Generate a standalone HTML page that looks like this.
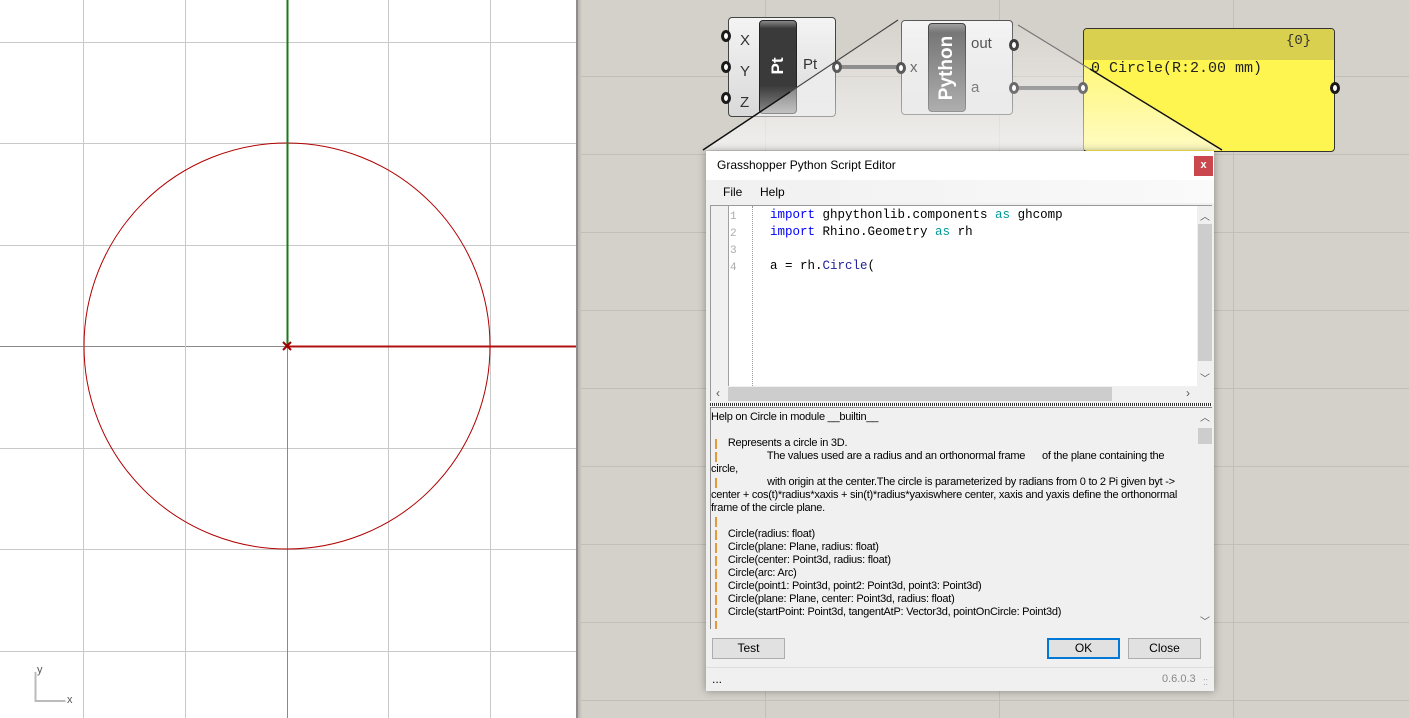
<!DOCTYPE html>
<html><head><meta charset="utf-8"><style>
*{margin:0;padding:0;box-sizing:border-box}
body{width:1409px;height:718px;overflow:hidden;position:relative;background:#d4d0ca;font-family:"Liberation Sans",sans-serif}
.abs{position:absolute}
.mono{font-family:"Liberation Mono",monospace}
.hl{position:absolute;left:0;height:1px;background:#c9c9c9;width:576px}
.vl{position:absolute;top:0;width:1px;background:#c9c9c9;height:718px}
.ghl{position:absolute;left:578px;right:0;height:1px;background:#c2beb8}
.gvl{position:absolute;top:0;width:1px;background:#c2beb8;height:718px}
.port{position:absolute;width:10px;height:12px;border:3px solid #1a1a1a;border-radius:50%;background:#fff}
.help div{white-space:pre;height:13px;line-height:13px}
.bar{position:absolute;left:4px;width:2px;height:10px;background:#e39a3a}
.btn{position:absolute;height:21px;background:#e1e1e1;border:1px solid #adadad;font-size:12px;text-align:center;line-height:19px;color:#000}
</style></head><body>
<!-- left viewport -->
<div class="abs" style="left:0;top:0;width:576px;height:718px;background:#fff"></div>
<div class="hl" style="top:42px"></div><div class="hl" style="top:143px"></div><div class="hl" style="top:245px"></div>
<div class="hl" style="top:448px"></div><div class="hl" style="top:549px"></div><div class="hl" style="top:651px"></div>
<div class="hl" style="top:346px;width:287px;background:#8a8a8a"></div>
<div class="vl" style="left:83px"></div><div class="vl" style="left:185px"></div><div class="vl" style="left:388px"></div><div class="vl" style="left:490px"></div>
<div class="vl" style="left:287px;top:346px;height:372px;background:#8a8a8a"></div>
<svg class="abs" style="left:0;top:0" width="576" height="718">
<circle cx="287" cy="346" r="203" fill="none" stroke="#b00000" stroke-width="1"/>
<line x1="287.5" y1="0" x2="287.5" y2="346" stroke="#1a7a1a" stroke-width="2"/>
<line x1="287" y1="346.5" x2="576" y2="346.5" stroke="#b01010" stroke-width="2"/>
<path d="M283 342l8 8M291 342l-8 8" stroke="#a00000" stroke-width="2"/>
<path d="M35.5 672v29h30" stroke="#bbb" stroke-width="2" fill="none"/>
<text x="37" y="673" font-size="11" fill="#555" font-family="Liberation Sans">y</text>
<text x="67" y="703" font-size="11" fill="#555" font-family="Liberation Sans">x</text>
</svg>
<div class="abs" style="left:576px;top:0;width:2px;height:718px;background:#8d8d8d"></div>
<div class="abs" style="left:578px;top:0;width:4px;height:718px;background:linear-gradient(90deg,#b5b1ab,#d4d0ca)"></div>
<!-- canvas grid -->
<div class="ghl" style="top:76px"></div><div class="ghl" style="top:154px"></div><div class="ghl" style="top:232px"></div>
<div class="ghl" style="top:310px"></div><div class="ghl" style="top:388px"></div><div class="ghl" style="top:466px"></div>
<div class="ghl" style="top:544px"></div><div class="ghl" style="top:622px"></div><div class="ghl" style="top:700px"></div>
<div class="gvl" style="left:765px"></div><div class="gvl" style="left:999px"></div><div class="gvl" style="left:1233px"></div>
<svg class="abs" style="left:0;top:0" width="1409" height="718">
<line x1="838" y1="67" x2="901" y2="67" stroke="#666" stroke-width="4"/>
<line x1="1016" y1="88" x2="1083" y2="88" stroke="#666" stroke-width="4"/>
</svg>
<!-- Pt component -->
<div class="abs" style="left:728px;top:17px;width:108px;height:100px;border:1px solid #444;border-radius:4px;background:linear-gradient(#f4f4f4,#d9d9d9)"></div>
<div class="abs" style="left:759px;top:20px;width:38px;height:94px;border:1px solid #222;border-radius:4px;background:linear-gradient(#888 0,#3a3a3a 8%,#3a3a3a 70%,#888 100%)"></div>
<div class="abs" style="left:760px;top:46px;width:36px;height:40px;color:#fff;font-weight:bold;font-size:17px;transform:rotate(-90deg);text-align:center;line-height:40px">Pt</div>
<div class="abs" style="left:740px;top:25px;font-size:15px;color:#333;line-height:31px">X<br>Y<br>Z</div>
<div class="abs" style="left:803px;top:56px;font-size:15px;color:#333">Pt</div>
<div class="port" style="left:721px;top:30px"></div><div class="port" style="left:721px;top:61px"></div><div class="port" style="left:721px;top:92px"></div>
<div class="port" style="left:832px;top:61px"></div>
<!-- Python component -->
<div class="abs" style="left:901px;top:20px;width:112px;height:95px;border:1px solid #555;border-radius:4px;background:linear-gradient(#f4f4f4,#d9d9d9)"></div>
<div class="abs" style="left:928px;top:23px;width:38px;height:89px;border:1px solid #333;border-radius:4px;background:linear-gradient(#999 0,#666 10%,#666 100%)"></div>
<div class="abs" style="left:907px;top:48px;width:80px;height:40px;color:#fff;font-weight:bold;font-size:19px;transform:rotate(-90deg);text-align:center;line-height:40px">Python</div>
<div class="abs" style="left:910px;top:59px;font-size:15px;color:#333">x</div>
<div class="abs" style="left:971px;top:35px;font-size:15px;color:#333">out</div>
<div class="abs" style="left:971px;top:79px;font-size:15px;color:#333">a</div>
<div class="port" style="left:896px;top:62px"></div><div class="port" style="left:1009px;top:39px"></div><div class="port" style="left:1009px;top:82px"></div>
<!-- Panel -->
<div class="abs" style="left:1083px;top:28px;width:252px;height:124px;border:1px solid #333;border-radius:4px;background:#fff550;overflow:hidden">
<div style="height:31px;background:#d9d04f"></div></div>
<div class="abs mono" style="left:1286px;top:33px;font-size:14px;color:#333">{0}</div>
<div class="abs mono" style="left:1091px;top:60px;font-size:15px;color:#222">0 Circle(R:2.00 mm)</div>
<div class="port" style="left:1078px;top:82px"></div><div class="port" style="left:1330px;top:82px"></div>
<!-- callout overlay -->
<svg class="abs" style="left:0;top:0" width="1409" height="718">
<defs><linearGradient id="g" x1="0" y1="0" x2="0" y2="1"><stop offset="0" stop-color="#fff" stop-opacity="0.05"/><stop offset="1" stop-color="#fff" stop-opacity="0.65"/></linearGradient></defs>
<polygon points="898,20 1018,25 1222,150 703,150" fill="url(#g)"/>
<line x1="703" y1="150" x2="898" y2="20" stroke="#444" stroke-width="1.2"/>
<line x1="703" y1="150" x2="790" y2="92" stroke="#111" stroke-width="1.4"/>
<line x1="1018" y1="25" x2="1222" y2="150" stroke="#777" stroke-width="1.2"/>
<line x1="1090" y1="69" x2="1222" y2="150" stroke="#111" stroke-width="1.4"/>
</svg>
<!-- Dialog -->
<div class="abs" style="left:706px;top:151px;width:508px;height:540px;background:#f0f0f0;box-shadow:0 0 8px rgba(0,0,0,.35)">
 <div class="abs" style="left:0;top:0;width:508px;height:29px;background:#fff"></div>
 <div class="abs" style="left:11px;top:7px;font-size:12px;color:#000">Grasshopper Python Script Editor</div>
 <div class="abs" style="left:488px;top:5px;width:19px;height:20px;background:#c9474d;color:#fff;font-size:11px;text-align:center;line-height:19px;font-weight:bold">x</div>
 <div class="abs" style="left:0;top:29px;width:508px;height:23px;background:linear-gradient(90deg,#f0f0f0,#fafafa)"></div>
 <div class="abs" style="left:17px;top:34px;font-size:12px">File</div>
 <div class="abs" style="left:54px;top:34px;font-size:12px">Help</div>
 <!-- editor -->
 <div class="abs" style="left:4px;top:54px;width:502px;height:196px;background:#fff;border-top:1px solid #999;border-left:1px solid #999">
  <div class="abs" style="left:0;top:0;width:17px;height:180px;background:#f0f0f0"></div>
  <div class="abs" style="left:17px;top:0;width:1px;height:180px;background:#a0a0a0"></div>
  <div class="abs" style="left:41px;top:0;width:0;height:180px;border-left:1px dotted #999"></div>
  <div class="abs mono" style="left:19px;top:3px;font-size:11px;color:#aaa;line-height:17px">1<br>2<br>3<br>4</div>
  <div class="abs mono" style="left:59px;top:1px;font-size:12.5px;line-height:17px;white-space:pre;color:#000"><span style="color:#00f">import</span> ghpythonlib.components <span style="color:#099">as</span> ghcomp
<span style="color:#00f">import</span> Rhino.Geometry <span style="color:#099">as</span> rh

a = rh.<span style="color:#22229a">Circle</span>(</div>
  <div class="abs" style="left:486px;top:0;width:16px;height:180px;background:#f0f0f0"></div>
  <div class="abs" style="left:487px;top:18px;width:14px;height:137px;background:#cdcdcd"></div>
  <div class="abs" style="left:489px;top:2px;font-size:10px;color:#555">︿</div>
  <div class="abs" style="left:489px;top:164px;font-size:10px;color:#555">﹀</div>
  <div class="abs" style="left:0;top:180px;width:502px;height:16px;background:#f0f0f0"></div>
  <div class="abs" style="left:17px;top:181px;width:384px;height:14px;background:#cdcdcd"></div>
  <div class="abs" style="left:5px;top:180px;font-size:12px;color:#555">‹</div>
  <div class="abs" style="left:475px;top:180px;font-size:12px;color:#555">›</div>
 </div>
 <div class="abs" style="left:4px;top:252px;width:502px;height:3px;background:repeating-linear-gradient(90deg,#333 0 1px,#fff 1px 2px)"></div>
 <!-- help -->
 <div class="abs" style="left:4px;top:256px;width:502px;height:222px;background:#f0f0f0;border-top:1px solid #888;border-left:1px solid #888;overflow:hidden;font-size:11px;letter-spacing:-0.25px;color:#000">
  <div class="abs" style="left:0;top:3px;white-space:pre">Help on Circle in module __builtin__</div>
  <div class="abs help" style="left:0;top:29px;line-height:13px">
<div>      Represents a circle in 3D.</div>
<div>                    The values used are a radius and an orthonormal frame      of the plane containing the</div>
<div>circle,</div>
<div>                    with origin at the center.The circle is parameterized by radians from 0 to 2 Pi given byt -&gt;</div>
<div>center + cos(t)*radius*xaxis + sin(t)*radius*yaxiswhere center, xaxis and yaxis define the orthonormal</div>
<div>frame of the circle plane.</div>
<div> </div>
<div>      Circle(radius: float)</div>
<div>      Circle(plane: Plane, radius: float)</div>
<div>      Circle(center: Point3d, radius: float)</div>
<div>      Circle(arc: Arc)</div>
<div>      Circle(point1: Point3d, point2: Point3d, point3: Point3d)</div>
<div>      Circle(plane: Plane, center: Point3d, radius: float)</div>
<div>      Circle(startPoint: Point3d, tangentAtP: Vector3d, pointOnCircle: Point3d)</div>
  </div>
  <div class="bar" style="top:31px"></div><div class="bar" style="top:44px"></div><div class="bar" style="top:70px"></div>
  <div class="bar" style="top:109px"></div><div class="bar" style="top:122px"></div><div class="bar" style="top:135px"></div>
  <div class="bar" style="top:148px"></div><div class="bar" style="top:161px"></div><div class="bar" style="top:174px"></div>
  <div class="bar" style="top:187px"></div><div class="bar" style="top:200px"></div><div class="bar" style="top:213px"></div>
  <div class="abs" style="left:486px;top:0;width:16px;height:222px;background:#f0f0f0"></div>
  <div class="abs" style="left:487px;top:20px;width:14px;height:16px;background:#cdcdcd"></div>
  <div class="abs" style="left:489px;top:1px;font-size:10px;color:#555">︿</div>
  <div class="abs" style="left:489px;top:205px;font-size:10px;color:#555">﹀</div>
 </div>
 <div class="btn" style="left:6px;top:487px;width:73px">Test</div>
 <div class="btn" style="left:341px;top:487px;width:73px;border:2px solid #0078d7;line-height:17px">OK</div>
 <div class="btn" style="left:422px;top:487px;width:73px">Close</div>
 <div class="abs" style="left:0;top:516px;width:508px;height:1px;background:#ddd"></div>
 <div class="abs" style="left:6px;top:521px;font-size:12px">...</div>
 <div class="abs" style="left:456px;top:522px;font-size:11px;color:#888">0.6.0.3</div>
 <div class="abs" style="left:497px;top:527px;font-size:8px;color:#999">⁚⁚</div>
</div>
</body></html>
